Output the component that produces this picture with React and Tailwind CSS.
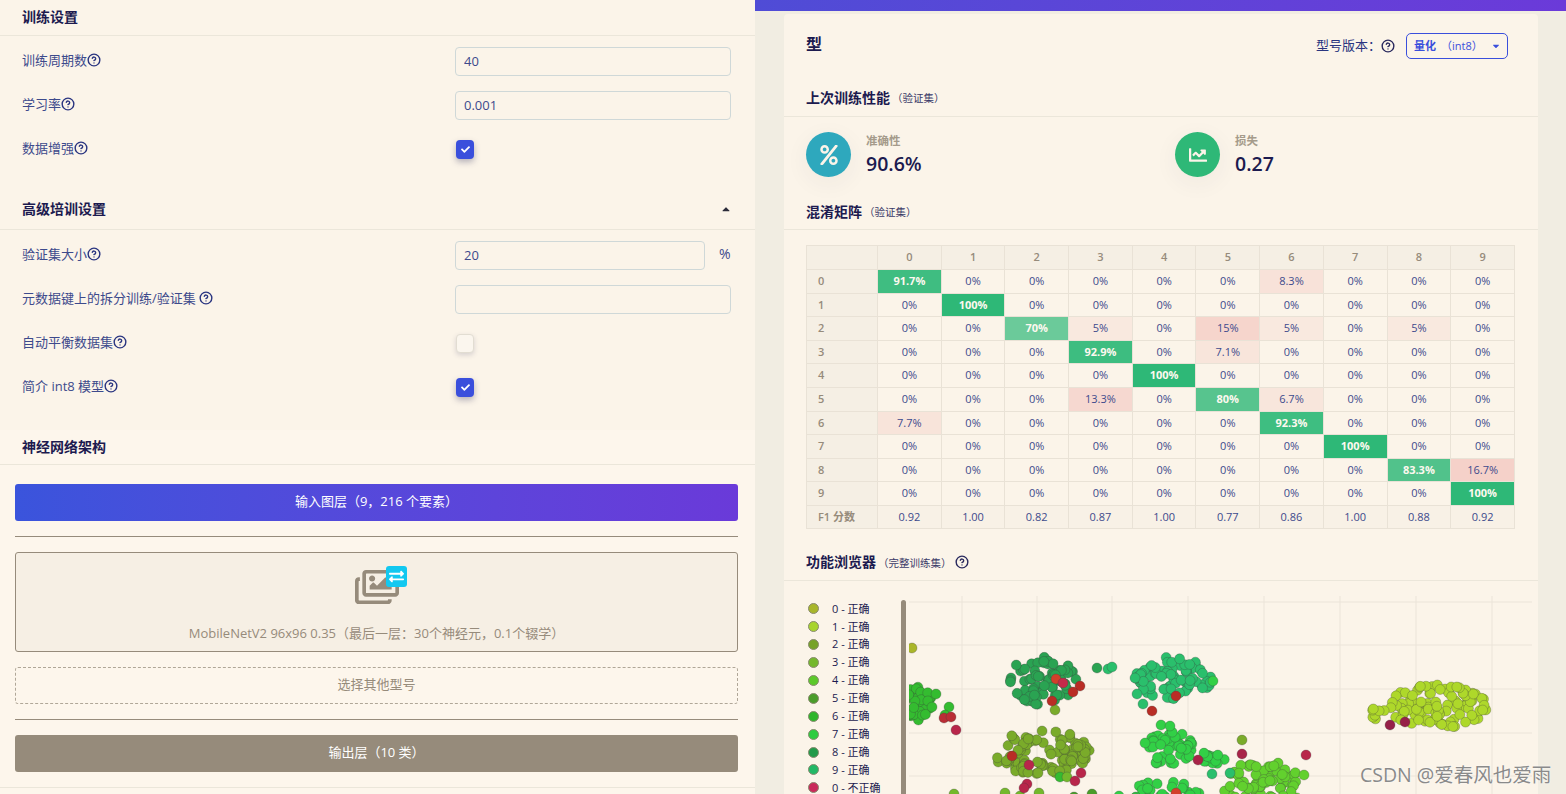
import { CircleHelp } from 'lucide-react';
import { FaCaretDown, FaCaretUp, FaChartLine, FaCheck, FaExchangeAlt, FaPercent, FaRegImages } from 'react-icons/fa';

const FONT = "font-['Open_Sans','Noto_Sans_CJK_SC',sans-serif]";

const matrix = [
  [91.7, 0, 0, 0, 0, 0, 8.3, 0, 0, 0],
  [0, 100, 0, 0, 0, 0, 0, 0, 0, 0],
  [0, 0, 70, 5, 0, 15, 5, 0, 5, 0],
  [0, 0, 0, 92.9, 0, 7.1, 0, 0, 0, 0],
  [0, 0, 0, 0, 100, 0, 0, 0, 0, 0],
  [0, 0, 0, 13.3, 0, 80, 6.7, 0, 0, 0],
  [7.7, 0, 0, 0, 0, 0, 92.3, 0, 0, 0],
  [0, 0, 0, 0, 0, 0, 0, 100, 0, 0],
  [0, 0, 0, 0, 0, 0, 0, 0, 83.3, 16.7],
  [0, 0, 0, 0, 0, 0, 0, 0, 0, 100],
];
const f1 = ['0.92', '1.00', '0.82', '0.87', '1.00', '0.77', '0.86', '1.00', '0.88', '0.92'];

const legend = [
  ['0 - 正确', '#a8b62a'],
  ['1 - 正确', '#a8d42e'],
  ['2 - 正确', '#76a228'],
  ['3 - 正确', '#74b82c'],
  ['4 - 正确', '#5cc92a'],
  ['5 - 正确', '#4a9c2a'],
  ['6 - 正确', '#2eb52a'],
  ['7 - 正确', '#2ecc40'],
  ['8 - 正确', '#219a4a'],
  ['9 - 正确', '#22b866'],
  ['0 - 不正确', '#c92a5a'],
];

// blobs of the feature explorer, in page coordinates
const clusters = [
  { color: '#2aa352', cx: 1041, cy: 681, rx: 36, ry: 25, n: 75 },
  { color: '#2abf6c', cx: 1173, cy: 677, rx: 39, ry: 23, n: 75 },
  { color: '#34bc30', cx: 917, cy: 704, rx: 15, ry: 18, n: 32 },
  { color: '#7aab2a', cx: 1040, cy: 751, rx: 53, ry: 22, n: 100 },
  { color: '#32d046', cx: 1170, cy: 748, rx: 24, ry: 18, n: 42 },
  { color: '#32d046', cx: 1213, cy: 755, rx: 13, ry: 9, n: 16 },
  { color: '#62d02e', cx: 1264, cy: 784, rx: 42, ry: 24, n: 85 },
  { color: '#32d046', cx: 1166, cy: 792, rx: 37, ry: 12, n: 38 },
  { color: '#aed82a', cx: 1437, cy: 706, rx: 50, ry: 22, n: 100 },
  { color: '#aed82a', cx: 1377, cy: 713, rx: 9, ry: 6, n: 7 },
];

const singles = [
  [912, 647, '#aab62a'], [936, 693, '#34bc30'], [932, 706, '#34bc30'], [949, 706, '#34bc30'], [945, 714, '#34bc30'],
  [1097, 667, '#2aa352'], [1108, 668, '#2abf6c'], [1112, 666, '#2abf6c'], [1055, 709, '#7aab2a'], [1135, 677, '#2abf6c'],
  [1137, 693, '#2abf6c'], [1143, 703, '#2abf6c'], [1213, 680, '#32d046'], [1161, 724, '#32d046'], [1170, 725, '#32d046'],
  [1145, 742, '#32d046'], [1242, 739, '#7aab2a'], [1212, 773, '#2abf6c'], [1230, 772, '#2abf6c'], [1304, 774, '#62d02e'],
  [1060, 776, '#34bc30'], [1067, 776, '#74b82c'], [954, 793, '#74b82c'], [1005, 792, '#74b82c'], [1020, 795, '#74b82c'],
  [1039, 792, '#74b82c'], [1074, 796, '#4a9c2a'], [1092, 793, '#4a9c2a'], [1119, 795, '#32d046'], [1135, 797, '#32d046'],
];

const wrong = [
  [1056, 678, '#d2402a'], [1063, 682, '#c42a4a'], [1080, 685, '#b92d25'], [1073, 691, '#b92d25'], [1052, 700, '#b92d25'],
  [1176, 695, '#b92d25'], [1152, 710, '#b92d25'], [944, 717, '#b92d35'], [951, 716, '#b92d35'], [956, 729, '#b8264a'],
  [1012, 755, '#b92d25'], [1029, 764, '#b8264a'], [1081, 772, '#b8264a'], [1075, 780, '#b8264a'], [1027, 783, '#b8264a'],
  [1024, 787, '#b8264a'], [1198, 759, '#a82448'], [1242, 753, '#a82448'], [1306, 754, '#b8264a'], [1176, 792, '#d2402a'],
  [1390, 724, '#962048'], [1405, 721, '#962048'],
];

function buildPoints() {
  let seed = 12345;
  const rand = () => {
    seed = (seed * 16807) % 2147483647;
    return seed / 2147483647;
  };
  const points = [];
  clusters.forEach(c => {
    for (let i = 0; i < c.n; i++) {
      const a = rand() * Math.PI * 2;
      const r = Math.pow(rand(), 0.48);
      points.push([c.cx + Math.cos(a) * r * c.rx, c.cy + Math.sin(a) * r * c.ry, c.color]);
    }
  });
  return points.concat(singles);
}

const points = buildPoints();

function Help({ className = '' }) {
  return <CircleHelp size={14} strokeWidth={2.4} className={`inline-block shrink-0 text-[#2a3580] ${className}`} />;
}

function SectionHead({ children, className = '' }) {
  return (
    <div className={`flex items-center justify-between border-b border-[#ebe6da] px-[22px] pb-[2px] text-[14px] font-semibold text-[#1c1a4f] ${className}`}>
      {children}
    </div>
  );
}

function Row({ label, gap, children }) {
  return (
    <div className="flex h-[29px] items-start">
      <div className="flex w-[433px] items-center pt-[4px] text-[13px] leading-[18px] text-[#3d4a8c]">
        <span>{label}</span>
        <Help className={gap ? 'ml-[3px]' : ''} />
      </div>
      {children}
    </div>
  );
}

function TextInput({ value, className = 'w-[276px]' }) {
  return (
    <input
      readOnly
      value={value}
      className={`h-[29px] rounded-[4px] border border-[#cfd8d8] bg-transparent px-[8px] pb-[2px] text-[13px] text-[#3d4a8c] outline-none ${className}`}
    />
  );
}

function Checkbox({ checked }) {
  if (!checked) {
    return <div className="ml-[1px] mt-[5px] h-[19px] w-[18px] rounded-[4px] border border-[#e2ddd2] bg-[#fbf6ee] shadow-[0_2px_5px_rgba(50,50,93,0.18)]" />;
  }
  return (
    <div className="ml-[1px] mt-[5px] flex h-[19px] w-[18px] items-center justify-center rounded-[4px] bg-[#3a4fdc] shadow-[0_3px_6px_rgba(50,50,93,0.35)]">
      <FaCheck size={9} className="text-white" />
    </div>
  );
}

function LeftPanel() {
  return (
    <div className="w-[755px] shrink-0 bg-[#fbf4e9]">
      <SectionHead className="h-[36px]">训练设置</SectionHead>
      <div className="flex h-[154px] flex-col gap-[15px] px-[22px] pt-[11px]">
        <Row label="训练周期数"><TextInput value="40" /></Row>
        <Row label="学习率"><TextInput value="0.001" /></Row>
        <Row label="数据增强"><Checkbox checked /></Row>
      </div>
      <SectionHead className="h-[40px] pr-[23px]">
        <span>高级培训设置</span>
        <FaCaretUp size={12} className="text-[#2b2b3a]" />
      </SectionHead>
      <div className="flex h-[200px] flex-col gap-[15px] px-[22px] pt-[11px]">
        <Row label="验证集大小">
          <TextInput value="20" className="w-[250px]" />
          <span className="ml-[14px] pt-[2px] text-[14px] text-[#3d4a8c]">%</span>
        </Row>
        <Row label="元数据键上的拆分训练/验证集" gap><TextInput value="" /></Row>
        <Row label="自动平衡数据集"><Checkbox /></Row>
        <Row label="简介 int8 模型"><Checkbox checked /></Row>
      </div>
      <SectionHead className="h-[35px] bg-[#fdf6ec]">神经网络架构</SectionHead>
      <div className="bg-[#fdf6ec] pl-[15px] pr-[17px] pt-[19px]">
        <div className="flex h-[37px] items-center justify-center rounded-[3px] bg-gradient-to-r from-[#3a54dc] to-[#6a3ad9] pb-[2px] text-[13px] text-white">
          输入图层（9，216 个要素）
        </div>
        <div className="my-[15px] h-px bg-[#968b7b]" />
        <div className="flex h-[100px] flex-col items-center rounded-[3px] border border-[#968b7b] bg-[#f6efe4]">
          <div className="relative ml-[8px] mt-[13px] h-[40px] w-[52px]">
            <FaRegImages size={44} className="absolute left-0 top-[-1px] text-[#968b7b]" />
            <div className="absolute left-[31px] top-0 flex h-[21px] w-[21px] items-center justify-center rounded-[3px] bg-[#12c8f0]">
              <FaExchangeAlt size={15} className="text-white" />
            </div>
          </div>
          <div className="mt-[18px] text-[13px] text-[#968b7b]">MobileNetV2 96x96 0.35（最后一层：30个神经元，0.1个辍学）</div>
        </div>
        <div className="mt-[15px] flex h-[37px] items-center justify-center rounded-[3px] border border-dashed border-[#b0a798] pb-[2px] text-[13px] text-[#968b7b]">
          选择其他型号
        </div>
        <div className="my-[15px] h-px bg-[#968b7b]" />
        <div className="flex h-[37px] items-center justify-center rounded-[3px] bg-[#968b7b] pb-[2px] text-[13px] text-white">
          输出层（10 类）
        </div>
      </div>
      <div className="bg-[#fdf6ec] pt-[15px]">
        <div className="h-px bg-[#ebe6da]" />
        <div className="h-[10px]" />
      </div>
    </div>
  );
}

function CardHead({ title, note, help, className = '' }) {
  return (
    <div className={`flex items-center border-b border-[#ebe6da] px-[22px] ${className}`}>
      <span className="pb-[2px] text-[14px] font-semibold text-[#1c1a4f]">{title}</span>
      <span className="ml-[2px] pt-[2px] text-[10.5px] text-[#3a3a68]">（{note}）</span>
      {help && <CircleHelp size={14} strokeWidth={2.4} className="mb-[2px] ml-[3px] text-[#2a2a5e]" />}
    </div>
  );
}

function Stat({ icon, color, label, value, className = '' }) {
  return (
    <div className={`flex items-start ${className}`}>
      <div className={`flex h-[45px] w-[45px] items-center justify-center rounded-full shadow-[0_6px_24px_rgba(50,50,93,0.06)] ${color}`}>
        {icon}
      </div>
      <div className="ml-[15px]">
        <div className="text-[11.5px] font-semibold leading-[18px] text-[#a59b8b]">{label}</div>
        <div className="text-[19.5px] font-semibold leading-[28px] text-[#1c1a4f]">{value}</div>
      </div>
    </div>
  );
}

function cellStyle(v) {
  if (v === 0) return undefined;
  if (v >= 50) return { backgroundColor: `rgba(46,184,119,${v / 100})` };
  return { backgroundColor: `rgba(230,120,120,${v / 60})` };
}

function Matrix() {
  const borderCls = 'border border-[#e9e2d6]';
  const headCls = `${borderCls} bg-[#f5efe4] text-[#968b7b] font-semibold`;
  return (
    <table className="h-[283px] w-[709px] table-fixed border-collapse text-[11px]">
      <colgroup>
        <col className="w-[71px]" />
      </colgroup>
      <thead>
        <tr className="h-[24px]">
          <th className={headCls}></th>
          {matrix.map((_, i) => (
            <th key={i} className={headCls}>{i}</th>
          ))}
        </tr>
      </thead>
      <tbody>
        {matrix.map((row, i) => (
          <tr key={i} className="h-[23.6px]">
            <td className={`${headCls} pl-[11px] text-left`}>{i}</td>
            {row.map((v, j) => (
              <td
                key={j}
                style={cellStyle(v)}
                className={`${borderCls} text-center ${v >= 50 ? 'font-bold text-[#fdf8ef]' : 'text-[#3d4a8c]'}`}
              >
                {v}%
              </td>
            ))}
          </tr>
        ))}
        <tr className="h-[23px]">
          <td className={`${headCls} pl-[11px] text-left`}>F1 分数</td>
          {f1.map((v, i) => (
            <td key={i} className={`${borderCls} bg-[#f8f1e6] text-center text-[#3d4a8c]`}>{v}</td>
          ))}
        </tr>
      </tbody>
    </table>
  );
}

function Scatter() {
  const vLines = [962, 1037, 1112, 1188, 1264, 1340, 1416, 1492];
  const hLines = [601, 644, 688, 732, 775];
  return (
    <svg viewBox="909 595 623 200" className="ml-[3px] h-[200px] w-[623px] shrink-0">
      {vLines.map(x => <line key={x} x1={x} x2={x} y1={595} y2={795} stroke="#ebe4d9" strokeWidth="1" />)}
      {hLines.map(y => <line key={y} x1={909} x2={1532} y1={y} y2={y} stroke="#ebe4d9" strokeWidth="1" />)}
      {points.concat(wrong).map(([x, y, c], i) => (
        <circle key={i} cx={x} cy={y} r="5" fill={c} stroke="#3c3c3c" strokeOpacity="0.32" strokeWidth="0.9" />
      ))}
    </svg>
  );
}

function ModelCard() {
  return (
    <div className="h-[780px] w-[754px] overflow-hidden rounded-t-[4px] bg-[#fbf4e9]">
      <div className="flex h-[66px] items-start justify-between pl-[22px] pr-[30px] pt-[19px]">
        <div className="text-[16px] font-semibold leading-[22px] text-[#1c1a4f]">型</div>
        <div className="flex items-center">
          <span className="text-[13px] text-[#2a3580]">型号版本：</span>
          <CircleHelp size={14} strokeWidth={2.4} className="text-[#2a2a5e]" />
          <div className="ml-[11px] flex h-[26px] w-[102px] items-center rounded-[5px] border border-[#3a4fdc] pl-[7px] pr-[6px] text-[11px] text-[#3a4fdc]">
            <span className="font-bold">量化</span>
            <span className="ml-[5px]">（int8）</span>
            <FaCaretDown size={10} className="ml-auto" />
          </div>
        </div>
      </div>
      <CardHead title="上次训练性能" note="验证集" className="h-[37px]" />
      <div className="flex h-[78px] items-start px-[22px] pt-[15px]">
        <Stat
          color="bg-[#2ea8bd]"
          icon={<FaPercent size={20} className="text-[#fbf4e9]" />}
          label="准确性"
          value="90.6%"
          className="w-[369px]"
        />
        <Stat
          color="bg-[#2eb877]"
          icon={<FaChartLine size={18} className="text-[#fbf4e9]" />}
          label="损失"
          value="0.27"
        />
      </div>
      <CardHead title="混淆矩阵" note="验证集" className="h-[35px]" />
      <div className="px-[22px] pt-[15px]">
        <Matrix />
      </div>
      <CardHead title="功能浏览器" note="完整训练集" help className="mt-[17px] h-[35px]" />
      <div className="flex pl-[22px] pt-[14px]">
        <div className="w-[95px] shrink-0 pl-[2px] pt-[5px]">
          {legend.map(([name, color]) => (
            <div key={name} className="flex h-[17.9px] items-center text-[11px] text-[#1c1a4f]">
              <span className="h-[11px] w-[11px] shrink-0 rounded-full border border-[#8a8a70]" style={{ backgroundColor: color }} />
              <span className="ml-[13px] whitespace-nowrap">{name}</span>
            </div>
          ))}
        </div>
        <div className="mt-[5px] h-[220px] w-[5px] shrink-0 rounded-full bg-[#968b7b]" />
        <div className="pt-[1px]">
          <Scatter />
        </div>
      </div>
    </div>
  );
}

export default function App() {
  return (
    <div className={`relative flex h-screen overflow-hidden bg-[#f1ede2] ${FONT}`}>
      <LeftPanel />
      <div className="min-w-0 flex-1">
        <div className="h-[11px] bg-gradient-to-r from-[#4f4cd6] to-[#6b3ad9]" />
        <div className="pl-[29px] pt-[3px]">
          <ModelCard />
        </div>
      </div>
      <div className="absolute left-[1360px] top-[762px] whitespace-nowrap text-[19.5px] leading-[26px] text-[#8a8a8a] [text-shadow:0_0_2px_#fff]">
        CSDN @爱春风也爱雨
      </div>
    </div>
  );
}
